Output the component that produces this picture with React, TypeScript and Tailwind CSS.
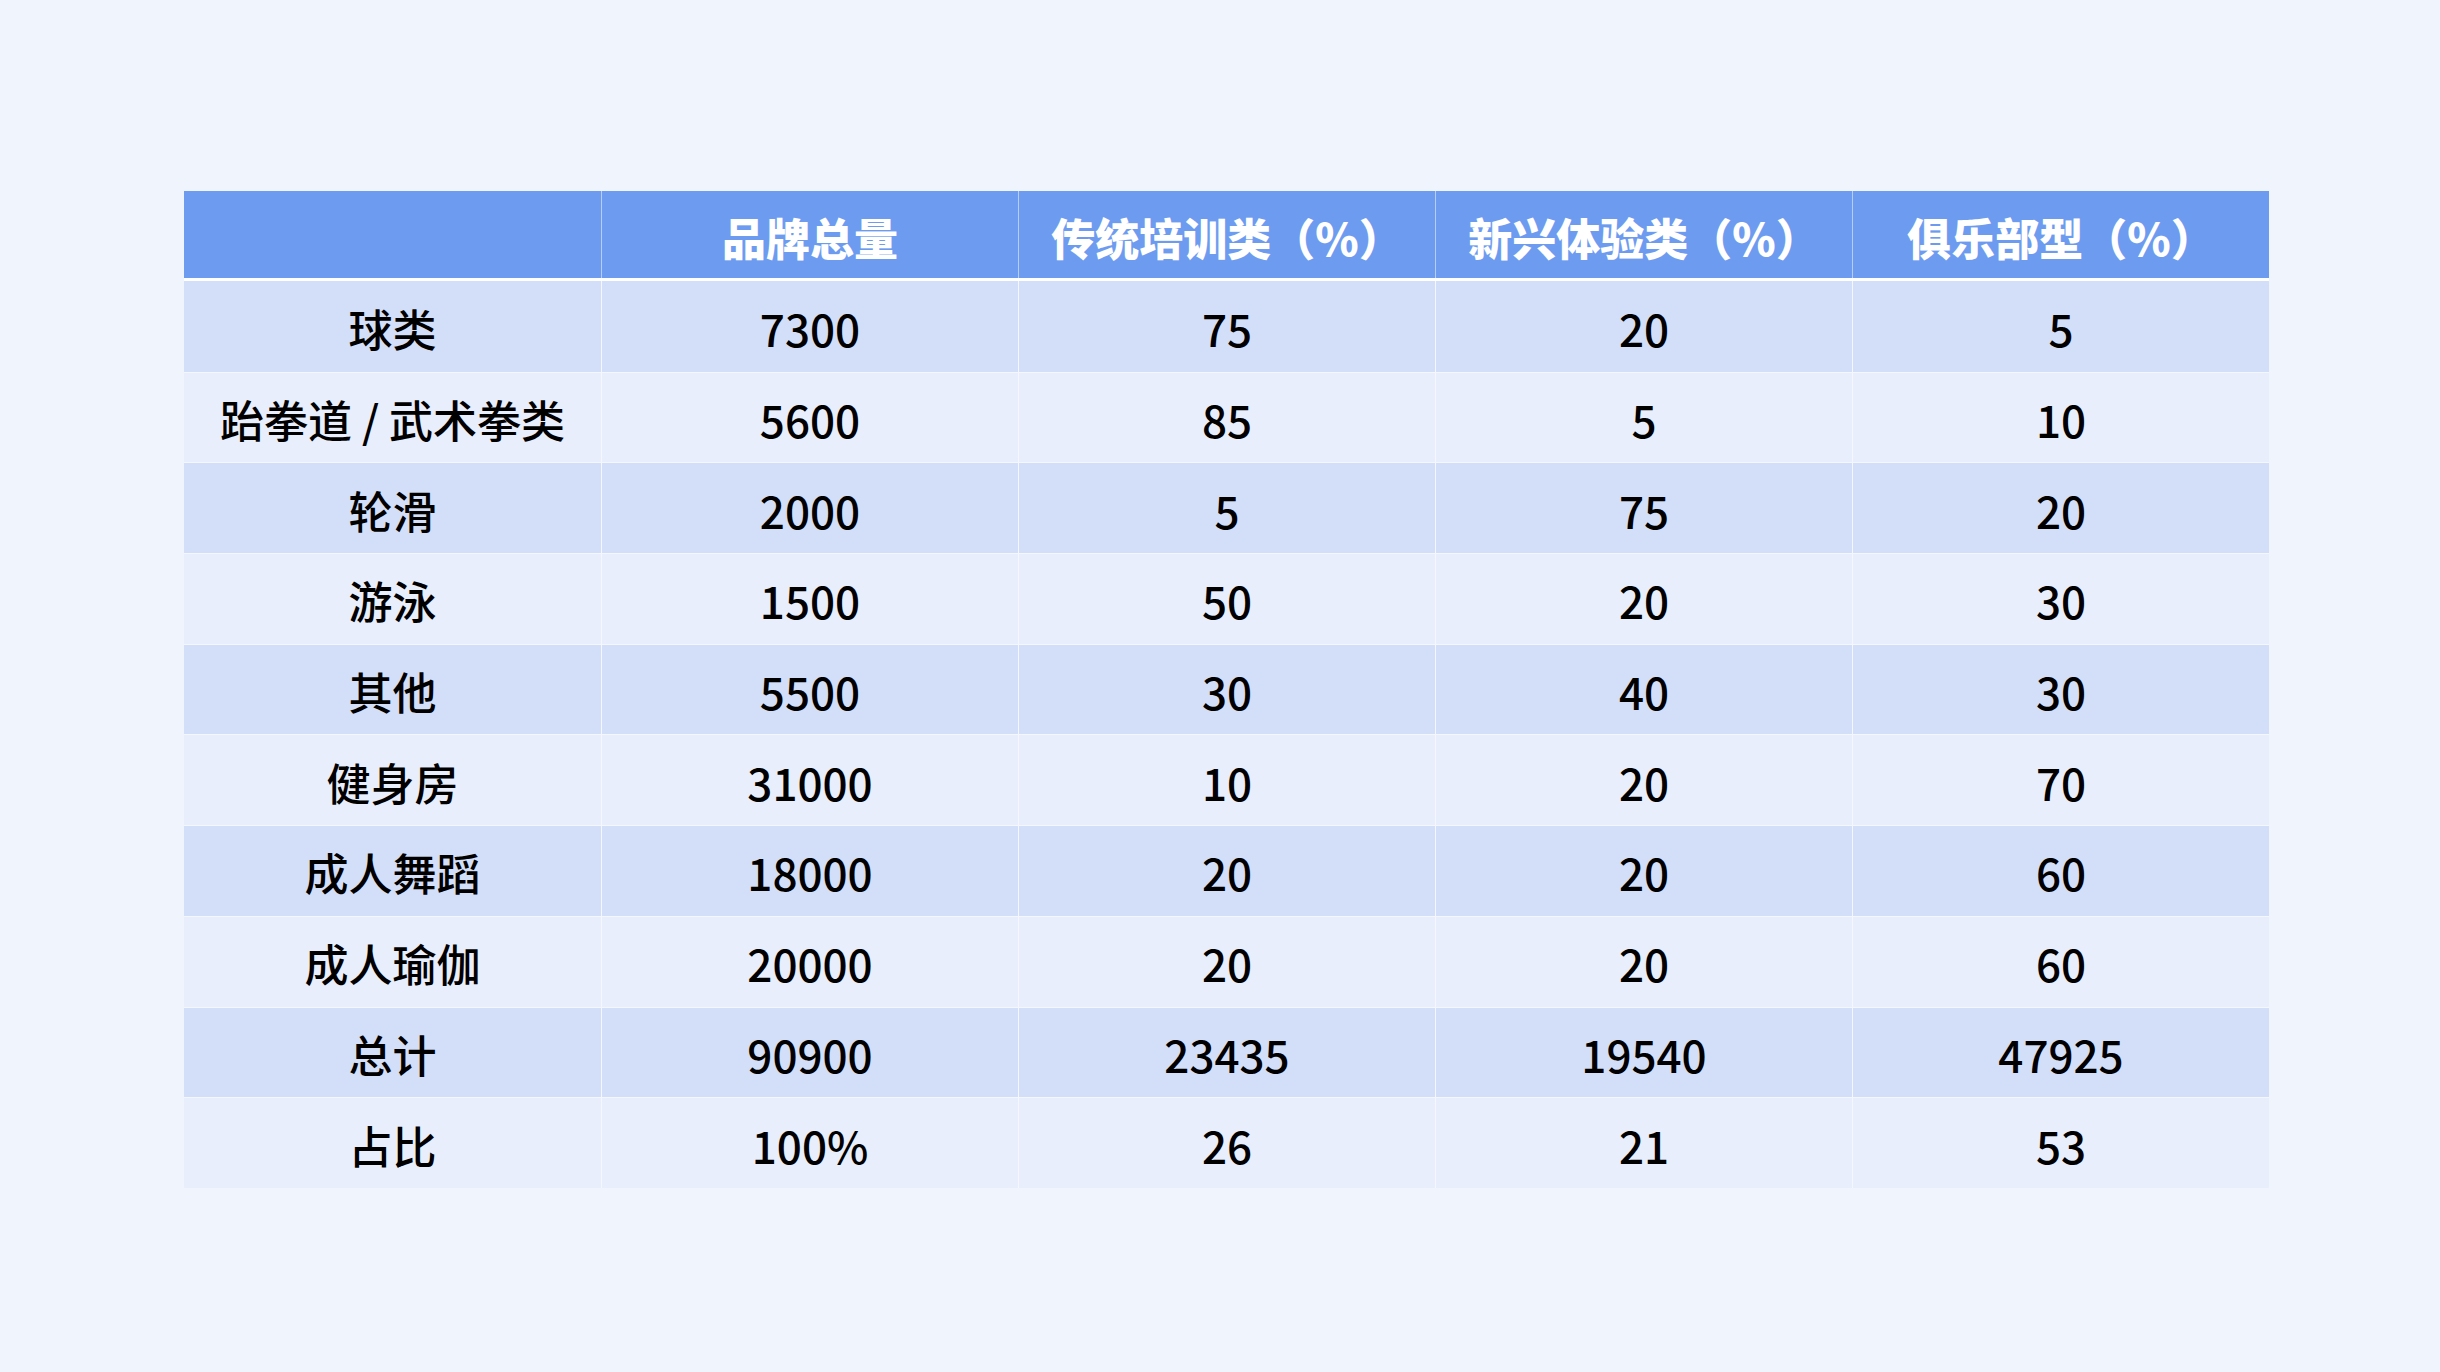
import React from 'react';

const headers = ['', '品牌总量', '传统培训类（%）', '新兴体验类（%）', '俱乐部型（%）'];

const rows: string[][] = [
  ['球类', '7300', '75', '20', '5'],
  ['跆拳道 / 武术拳类', '5600', '85', '5', '10'],
  ['轮滑', '2000', '5', '75', '20'],
  ['游泳', '1500', '50', '20', '30'],
  ['其他', '5500', '30', '40', '30'],
  ['健身房', '31000', '10', '20', '70'],
  ['成人舞蹈', '18000', '20', '20', '60'],
  ['成人瑜伽', '20000', '20', '20', '60'],
  ['总计', '90900', '23435', '19540', '47925'],
  ['占比', '100%', '26', '21', '53'],
];

const font = { fontFamily: '"Noto Sans CJK SC", "Noto Sans", sans-serif' };

const App: React.FC = () => {
  return (
    <div className="w-[2440px] h-[1372px] bg-[#eff4fd] pt-[191px] pl-[184px]" style={font}>
      <div className="w-[2085px]">
        {/* Header */}
        <div className="grid grid-cols-5 h-[90px] bg-[#6d9bef] border-b-[3px] border-white">
          {headers.map((h, i) => (
            <div
              key={i}
              className={`flex items-center justify-center pt-[5px] text-[44px] font-black text-white ${i > 0 ? 'border-l-[1.5px] border-[#b7cdf6]' : ''}`}
            >
              {h}
            </div>
          ))}
        </div>

        {/* Body */}
        {rows.map((r, ri) => (
          <div
            key={ri}
            className={`grid grid-cols-5 h-[90.7px] ${ri % 2 === 0 ? 'bg-[#d3dff8]' : 'bg-[#e8eefb]'} ${ri > 0 ? 'border-t-[1.5px] border-[#f4f7fe]' : ''}`}
          >
            {r.map((c, ci) => (
              <div
                key={ci}
                className={`flex items-center justify-center pt-[3px] text-[44px] font-medium text-black ${ci > 0 ? 'border-l-[1.5px] border-[#f4f7fe]' : ''}`}
              >
                {c}
              </div>
            ))}
          </div>
        ))}
      </div>
    </div>
  );
};

export default App;
